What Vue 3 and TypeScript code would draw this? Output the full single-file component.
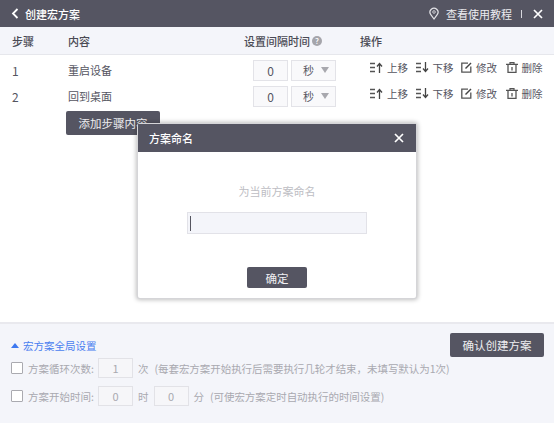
<script setup lang="ts">
interface Step { no: number; name: string }
const steps: Step[] = [
  { no: 1, name: '重启设备' },
  { no: 2, name: '回到桌面' },
]
</script>

<template>
  <div class="app">
    <header class="topbar">
      <div class="title">
        <svg class="back" width="8" height="11" viewBox="0 0 8 11"><path d="M6.5 1 2 5.5 6.5 10" fill="none" stroke="#fff" stroke-width="1.8" /></svg>
        <span>创建宏方案</span>
      </div>
      <div class="top-right">
        <svg width="10" height="13" viewBox="0 0 10 13"><path d="M5 12 1.8 7.6A4 4 0 1 1 8.2 7.6Z" fill="none" stroke="#e4e4e8" stroke-width="1.2" /><circle cx="5" cy="5" r="1.3" fill="none" stroke="#e4e4e8" stroke-width=".8" /></svg>
        <span class="tutorial">查看使用教程</span>
        <i class="sep"></i>
        <svg width="10" height="10" viewBox="0 0 10 10"><path d="M1 1 9 9M9 1 1 9" stroke="#fff" stroke-width="1.7" /></svg>
      </div>
    </header>

    <div class="thead row-grid">
      <span>步骤</span>
      <span>内容</span>
      <span class="th-interval">设置间隔时间<i class="help">?</i></span>
      <span>操作</span>
    </div>

    <main class="tbody">
      <div v-for="s in steps" :key="s.no" class="row row-grid">
        <span class="no">{{ s.no }}</span>
        <span>{{ s.name }}</span>
        <div class="interval">
          <span class="num">0</span>
          <span class="unit">秒<i class="caret"></i></span>
        </div>
        <div class="ops">
          <span class="op">
            <svg width="13" height="11" viewBox="0 0 13 11"><path d="M0 1.5h5M0 5.5h5M0 9.5h5" stroke="#555" stroke-width="1.3" /><path d="M9.5 11V2M7 4.5l2.5-3 2.5 3" fill="none" stroke="#444" stroke-width="1.3" /></svg>
            上移
          </span>
          <span class="op">
            <svg width="13" height="11" viewBox="0 0 13 11"><path d="M0 1.5h5M0 5.5h5M0 9.5h5" stroke="#555" stroke-width="1.3" /><path d="M9.5 0v9M7 6.5l2.5 3 2.5-3" fill="none" stroke="#444" stroke-width="1.3" /></svg>
            下移
          </span>
          <span class="op">
            <svg width="11" height="11" viewBox="0 0 11 11"><path d="M7 1.2H.8v9h9V4.5" fill="none" stroke="#555" stroke-width="1.3" /><path d="M4.5 6.5 10 1" stroke="#444" stroke-width="1.5" /></svg>
            修改
          </span>
          <span class="op op-last">
            <svg width="12" height="11" viewBox="0 0 12 11"><path d="M0 2.4h12M4 2.2V.7h4v1.5" fill="none" stroke="#555" stroke-width="1.2" /><path d="M2 2.5v8h8v-8M6 5v3.4" fill="none" stroke="#555" stroke-width="1.3" /></svg>
            删除
          </span>
        </div>
      </div>
      <button class="add-btn" type="button">添加步骤内容</button>
    </main>

    <footer class="panel">
      <div class="panel-main">
        <div class="global">
          <i class="up"></i>
          <span>宏方案全局设置</span>
        </div>
        <div class="opt opt-first">
          <i class="check"></i>
          <span class="opt-label">方案循环次数:</span>
          <span class="box">1</span>
          <span class="unit-text">次</span>
          <span class="hint">(每套宏方案开始执行后需要执行几轮才结束，未填写默认为1次)</span>
        </div>
        <div class="opt">
          <i class="check"></i>
          <span class="opt-label">方案开始时间:</span>
          <span class="box">0</span>
          <span class="unit-text">时</span>
          <span class="box">0</span>
          <span class="unit-text">分</span>
          <span class="hint">(可使宏方案定时自动执行的时间设置)</span>
        </div>
      </div>
      <button class="confirm" type="button">确认创建方案</button>
    </footer>

    <section class="dialog">
      <div class="dlg-head">
        <span>方案命名</span>
        <svg width="10" height="10" viewBox="0 0 10 10"><path d="M1 1 9 9M9 1 1 9" stroke="#fff" stroke-width="1.7" /></svg>
      </div>
      <div class="dlg-body">
        <p class="dlg-tip">为当前方案命名</p>
        <div class="dlg-input"><i class="cursor"></i></div>
        <button class="dlg-ok" type="button">确定</button>
      </div>
    </section>
  </div>
</template>

<style>
html, body { margin: 0; background: #fff; }
</style>

<style scoped>
.app {
  position: relative;
  width: 554px;
  height: 423px;
  overflow: hidden;
  display: flex;
  flex-direction: column;
  background: #fff;
  font-family: "Noto Sans CJK SC", "Noto Sans", sans-serif;
  font-size: 11px;
  color: #55555f;
}
button { font-family: inherit; border: 0; padding: 0; cursor: pointer; }
i { display: block; font-style: normal; }
.topbar {
  height: 27px;
  flex: none;
  box-sizing: border-box;
  padding: 0 11px;
  display: flex;
  align-items: center;
  justify-content: space-between;
  background: #555562;
  color: #fff;
}
.title { display: flex; align-items: center; gap: 6px; font-weight: 500; }
.top-right { display: flex; align-items: center; }
.tutorial { margin-left: 7px; color: #ececf0; }
.sep { width: 1px; height: 8px; background: #d8d8de; margin: 0 11px 0 9px; }
.row-grid {
  display: grid;
  grid-template-columns: 56px 176px 116px 1fr;
  align-items: center;
  padding-left: 12px;
}
.thead {
  height: 28px;
  flex: none;
  box-sizing: border-box;
  background: #f4f5fa;
  border-bottom: 1px solid #e6e7ec;
  color: #4a4a54;
  font-weight: 500;
}
.th-interval { display: flex; align-items: center; white-space: nowrap; }
.help {
  width: 10px;
  height: 10px;
  margin-left: 2px;
  border-radius: 50%;
  background: #a5a5ab;
  color: #fff;
  font-size: 8px;
  line-height: 10px;
  text-align: center;
}
.tbody { flex: 1; padding-top: 2px; position: relative; }
.row { height: 26px; }
.no { font-size: 12px; }
.interval { display: flex; gap: 3px; margin-left: 9px; height: 21px; }
.num, .unit {
  box-sizing: border-box;
  border: 1px solid #e3e3e8;
  background: #f9f9fb;
  display: flex;
  align-items: center;
}
.num { width: 35px; justify-content: center; font-size: 12px; }
.unit { width: 45px; padding-left: 11px; gap: 7px; }
.caret {
  border: 4.5px solid transparent;
  border-top: 6px solid #a8a8ae;
  border-bottom: 0;
}
.ops {
  display: flex;
  align-self: start;
  gap: 7.5px;
  margin: 3px 0 0 10px;
  white-space: nowrap;
  font-size: 10.5px;
}
.op { display: flex; align-items: center; gap: 4px; flex: none; }
.op-last { margin-left: 1px; }
.add-btn {
  margin: 2px 0 0 66px;
  display: block;
  width: 94px;
  height: 24px;
  border-radius: 2px;
  background: #555562;
  color: #ededf0;
  font-size: 11.5px;
}
.panel {
  height: 101px;
  flex: none;
  box-sizing: border-box;
  border-top: 2px solid #e9e9ee;
  background: #f4f5fa;
  padding: 9px 10px 0 11px;
  display: flex;
  justify-content: space-between;
  align-items: flex-start;
  color: #a9a9b0;
}
.panel-main { width: 0; white-space: nowrap; }
.global {
  display: flex;
  align-items: center;
  gap: 4px;
  margin-top: 5px;
  height: 15px;
  color: #4a7ef0;
  font-size: 10.5px;
}
.up {
  flex: none;
  border: 4.5px solid transparent;
  border-bottom: 5px solid #3d78f0;
  border-top: 0;
}
.opt { display: flex; align-items: center; height: 20px; margin-top: 8px; font-size: 10.5px; }
.opt-first { margin-top: 5px; }
.opt > * { flex: none; }
.check {
  box-sizing: border-box;
  width: 12px;
  height: 12px;
  border: 1px solid #aaaab0;
  background: #fff;
  border-radius: 1px;
}
.opt-label { margin-left: 5px; width: 70px; }
.box {
  box-sizing: border-box;
  width: 35px;
  height: 20px;
  border: 1px solid #e2e2e7;
  background: #f6f6f9;
  display: flex;
  align-items: center;
  justify-content: center;
  font-size: 11px;
}
.unit-text { margin: 0 5px; }
.hint { margin-left: 1px; font-size: 10.5px; letter-spacing: -0.05px; }
.confirm {
  width: 94px;
  height: 24px;
  border-radius: 2px;
  background: #555562;
  color: #ededf0;
  font-size: 11.5px;
}
.dialog {
  position: absolute;
  left: 138px;
  top: 124px;
  width: 278px;
  height: 174px;
  border-radius: 2px;
  background: #fff;
  box-shadow: 0 0 0 1px #d5d5d8, 0 0 4px 2px rgba(0, 0, 0, .25);
  display: flex;
  flex-direction: column;
}
.dlg-head {
  height: 28px;
  flex: none;
  box-sizing: border-box;
  padding: 0 12px 0 11px;
  display: flex;
  align-items: center;
  justify-content: space-between;
  background: #555562;
  color: #fff;
  font-weight: 500;
}
.dlg-body { flex: 1; display: flex; flex-direction: column; align-items: center; }
.dlg-tip { margin: 30px 0 0; height: 18px; line-height: 18px; color: #bdbdc3; }
.dlg-input {
  box-sizing: border-box;
  margin: 12px 0 0;
  width: 180px;
  height: 22px;
  border: 1px solid #e2e2e8;
  background: #f4f5fa;
  display: flex;
  align-items: center;
  padding-left: 2px;
}
.cursor { width: 1px; height: 15px; background: #55555f; }
.dlg-ok {
  margin-top: 33px;
  width: 60px;
  height: 21px;
  border-radius: 2px;
  background: #555562;
  color: #f0f0f3;
  font-size: 11.5px;
}
</style>
